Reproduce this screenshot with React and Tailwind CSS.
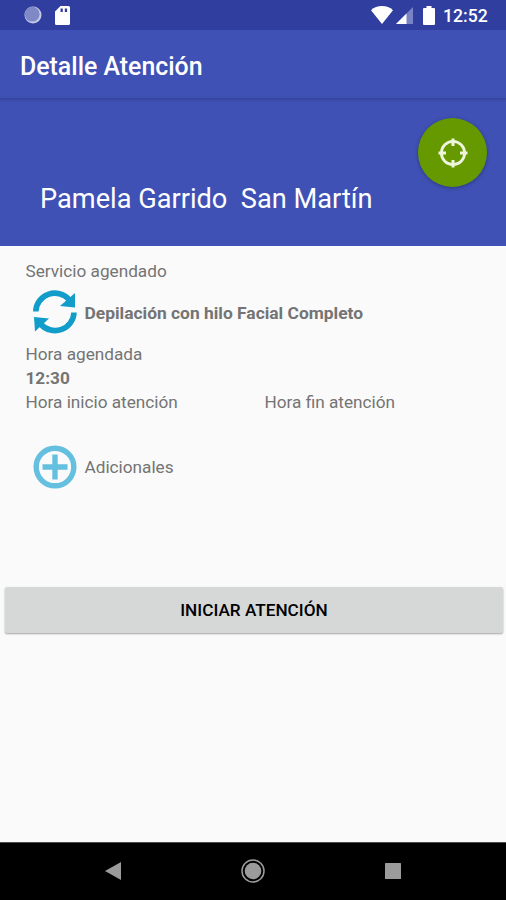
function StatusBar() {
  return (
    <div className="h-[30px] bg-[#303f9f] flex items-center justify-between pl-6 pr-[18px] text-white">
      <div className="flex items-center">
        <svg width="18" height="18" viewBox="0 0 18 18">
          <circle cx="9" cy="9" r="8.5" fill="#c5cae9" />
          <circle cx="8.2" cy="8.2" r="7.4" fill="#7f89c6" />
        </svg>
        <svg className="ml-[13px]" width="15" height="19" viewBox="0 0 15 19">
          <path
            d="M5.5 0H13.5Q15 0 15 1.5V17.5Q15 19 13.5 19H1.5Q0 19 0 17.5V5.5ZM5.5 2.5V6H7.8V2.500ZM9.800 2.500V6H12.100V2.500Z"
            fill="white"
            fillRule="evenodd"
          />
        </svg>
      </div>
      <div className="flex items-center">
        <svg width="22" height="18" viewBox="0 0 22 18">
          <path d="M11 18L0 4.2Q4.500 0 11 0T22 4.200Z" fill="white" />
        </svg>
        <svg className="ml-[3px]" width="17" height="17" viewBox="0 0 17 17">
          <path d="M0 17L17 0V17Z" fill="#7983c5" />
          <path d="M0 17L10.500 6.500V17Z" fill="white" />
        </svg>
        <svg className="ml-2.5" width="12" height="19" viewBox="0 0 12 19">
          <path d="M3.500 0H8.500V2H11Q12 2 12 3V18Q12 19 11 19H1Q0 19 0 18V3Q0 2 1 2H3.500Z" fill="white" />
        </svg>
        <span className="ml-2 w-[45px] text-[17.6px] leading-[30px] pt-px font-medium whitespace-nowrap">12:52</span>
      </div>
    </div>
  )
}

function TargetIcon() {
  return (
    <svg width="30" height="30" viewBox="0 0 30 30" fill="none" stroke="#eef5dc">
      <circle cx="15" cy="15" r="11.600" strokeWidth="2.800" />
      <path d="M15 0.500V8M15 22V29.500M0.500 15H8M22 15H29.500" strokeWidth="3" />
    </svg>
  )
}

function SyncIcon() {
  return (
    <svg className="-mt-0.5" width="44" height="44" viewBox="0 0 44 44" fill="none">
      <path d="M2.800 21.500A19 18.800 0 0 1 36 9.500" stroke="#129cc9" strokeWidth="5.600" />
      <path d="M42 3V17.500L27 16Z" fill="#129cc9" />
      <path d="M41 22.500A19 18.800 0 0 1 8 34.500" stroke="#129cc9" strokeWidth="5.600" />
      <path d="M1 27L16 28.500L2 41.500Z" fill="#129cc9" />
    </svg>
  )
}

function AddIcon() {
  return (
    <svg width="44" height="44" viewBox="0 0 44 44" fill="none" stroke="#65bfde">
      <circle cx="22" cy="22" r="18.800" strokeWidth="5.400" />
      <path d="M22 9.500V34.500M9.500 22H34.500" strokeWidth="5.400" />
    </svg>
  )
}

function NavBar() {
  return (
    <div className="h-[58px] bg-black border-t border-[#4a4a4a] flex items-center justify-between px-[105px] pb-px">
      <svg width="16" height="18" viewBox="0 0 16 18">
        <path d="M0 9L16 0V18Z" fill="#9b9b9b" />
      </svg>
      <svg width="24" height="24" viewBox="0 0 24 24">
        <circle cx="12" cy="12" r="11" fill="none" stroke="#9b9b9b" strokeWidth="1.500" />
        <circle cx="12" cy="12" r="8.300" fill="#9b9b9b" />
      </svg>
      <svg width="16" height="16" viewBox="0 0 16 16">
        <rect width="16" height="16" rx="0.500" fill="#9b9b9b" />
      </svg>
    </div>
  )
}

export default function App() {
  return (
    <div className="w-[506px] h-[900px] flex flex-col overflow-hidden bg-[#fafafa] font-['Roboto',sans-serif] text-[#747474]">
      <StatusBar />
      <header className="h-[68px] bg-[#3f51b5] flex items-center pl-5">
        <h1 className="text-white text-[24.9px] leading-none font-medium pt-1.5">Detalle Atención</h1>
      </header>

      <section className="h-[148px] bg-[#3f51b5] flex flex-col">
        <div className="h-1 shrink-0 bg-linear-to-b from-[#34439a] to-[#3f51b5]" />
        <div className="flex justify-end pr-[19px] pt-4">
          <button className="w-[69px] h-[69px] rounded-full bg-[#669900] shadow-[0_1px_4px_rgba(0,0,0,0.3)] flex items-center justify-center">
            <TargetIcon />
          </button>
        </div>
        <p className="pl-10 -mt-1 text-white text-[27.2px] leading-8 whitespace-pre">Pamela Garrido  San Martín</p>
      </section>

      <main className="flex-1 text-[17.2px] leading-6">
        <div className="pl-[25.5px] pt-[13px]">
          <p>Servicio agendado</p>
          <div className="flex items-center h-[59px] pl-[7px] gap-2">
            <SyncIcon />
            <span className="font-bold text-[17.4px]">Depilación con hilo Facial Completo</span>
          </div>
          <p>Hora agendada</p>
          <p className="font-bold">12:30</p>
          <div className="flex">
            <p className="w-[239px]">Hora inicio atención</p>
            <p>Hora fin atención</p>
          </div>
          <div className="flex items-center pl-[7px] gap-2 mt-[31px] h-[44px]">
            <AddIcon />
            <span>Adicionales</span>
          </div>
        </div>
        <div className="pl-[5px] pr-[3px] mt-[98px]">
          <button className="w-full h-[46px] rounded-[2px] bg-[#d6d7d7] shadow-[0_1px_2px_rgba(0,0,0,0.35)] text-black text-[17.2px] font-medium">
            INICIAR ATENCIÓN
          </button>
        </div>
      </main>

      <NavBar />
    </div>
  )
}
